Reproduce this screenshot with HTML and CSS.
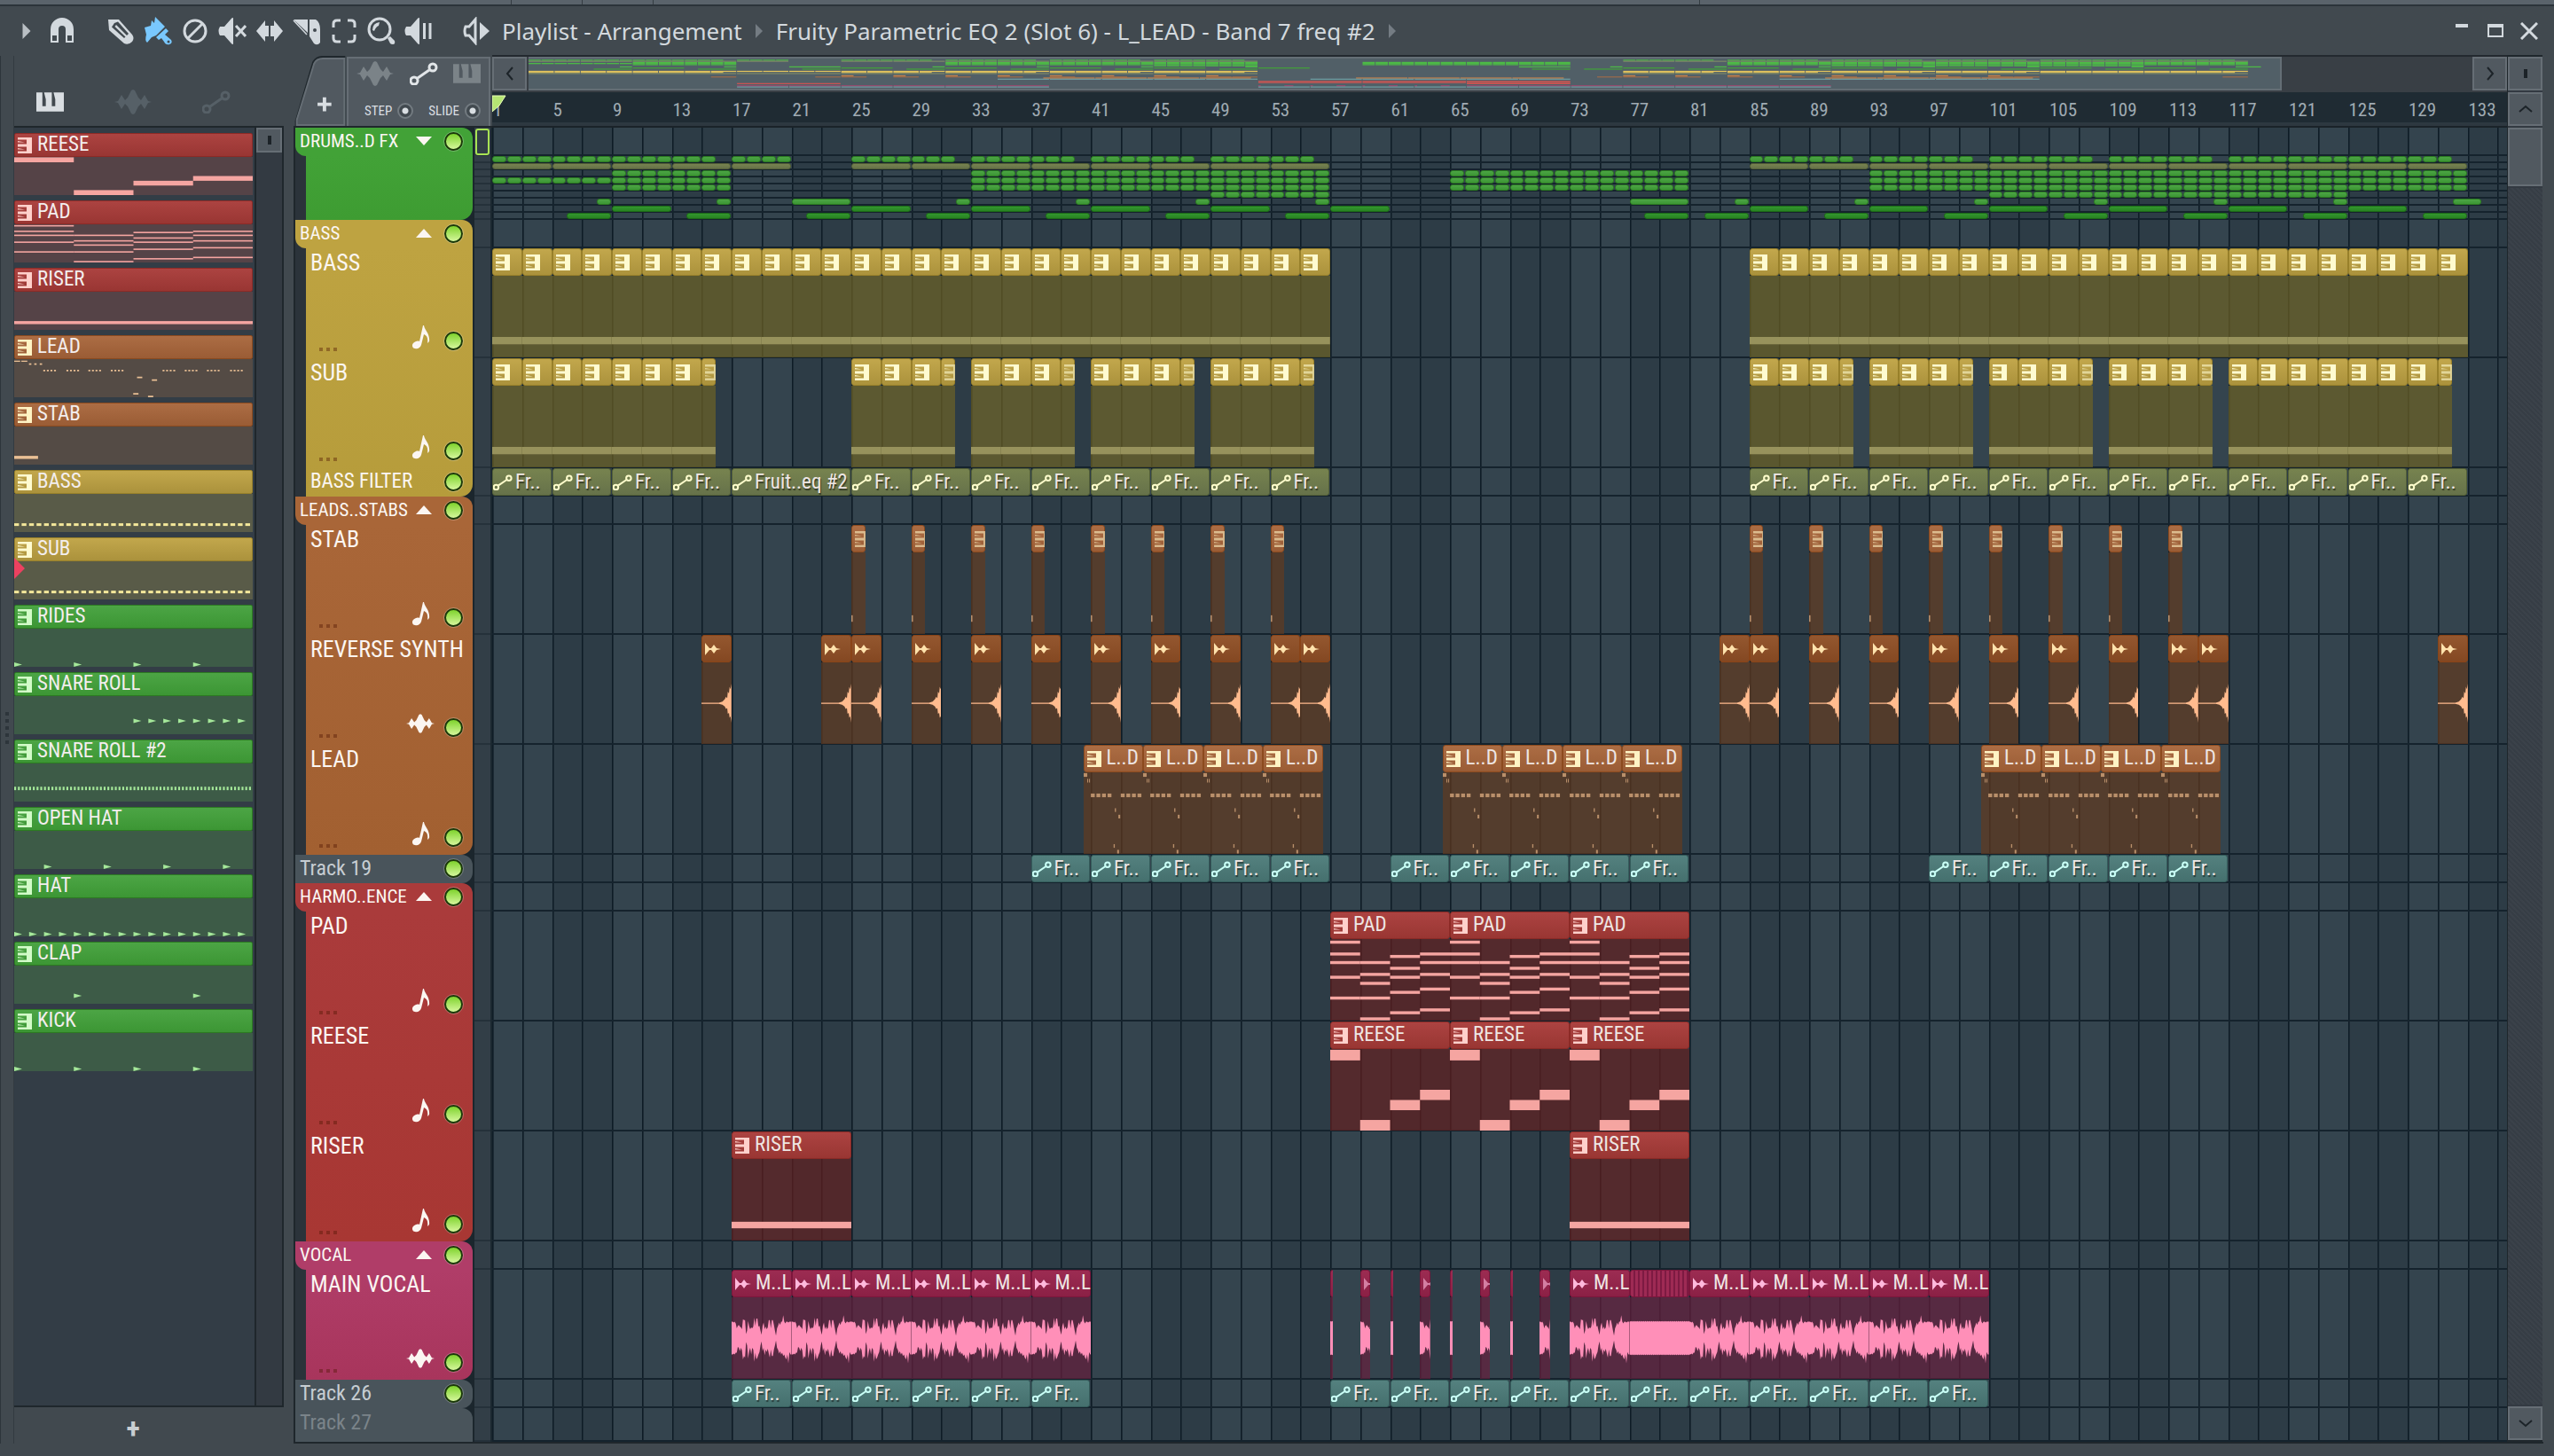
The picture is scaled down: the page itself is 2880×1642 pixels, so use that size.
FILE: index.html
```html
<!DOCTYPE html>
<html lang="en">
<head>
    <meta charset="UTF-8">
    <meta name="viewport" content="width=device-width, initial-scale=1.0">
    <title>Playlist - Arrangement</title>
    <link rel="stylesheet" href="styles.css">
</head>
<body>

    <svg class="sprite" aria-hidden="true">
        <symbol id="piano" viewBox="0 0 16 18"><path d="M0 0H16V18H0V15.500H10V10.500H0V7.500H10V2.500H0Z"/><path d="M0 4L8 5.500H0ZM0 12L8 13.500H0Z"/></symbol>
        <symbol id="keys" viewBox="0 0 32 22"><path d="M0 0H7V16H11V8L9 0H18V16H22V8L20 0H32V22H0Z"/></symbol>
        <symbol id="wave" viewBox="0 0 42 28"><path d="M0 14L4 13L8 6L12 12L15 9L19 1L21 0L23 1L27 9L30 12L34 6L38 13L42 14L38 15L34 22L30 16L27 19L23 27L21 28L19 27L15 19L12 16L8 22L4 15Z"/></symbol>
        <symbol id="sample" viewBox="0 0 18 14"><path d="M0 0L5 6L7 6L10 2L13 6L18 7L13 8L10 12L7 8L5 8L0 14Z"/></symbol>
        <symbol id="auto" viewBox="0 0 32 26"><g fill="none" stroke="currentColor" stroke-width="3"><circle cx="26" cy="6" r="4"/><circle cx="5" cy="21" r="4"/><path d="M9 18L22 9"/></g></symbol>
        <symbol id="note" viewBox="0 0 20 27"><path d="M12 0H13C14 6 20 9 19 18L17 20C18 14 16 11 13 10L10 22C9 25 6 27 3 26C0 26 -1 22 1 20C3 18 6 17 8 18Z"/></symbol>
    </svg>

    <div class="strip"><i></i><i></i><i></i><i></i></div>

    <header class="titlebar">
        <button class="tool menu" aria-label="Menu"><svg viewBox="0 0 10 20"><path d="M0 0L10 10L0 20Z"/></svg></button>
        <button class="tool" aria-label="Snap"><svg viewBox="0 0 32 32"><path d="M3 29V14A13 13 0 0 1 29 14V29H20V14A4 4 0 0 0 12 14V29Z"/><path class="cut" d="M5 21H10V27H5ZM22 21H27V27H22Z"/></svg></button>
        <div class="toolset">
            <button class="tool" aria-label="Draw"><svg viewBox="0 0 32 32"><path d="M2 3H14L29 20Q32 24 29 28Q25 32 20 30L3 15Z"/><path class="cut" d="M9 7L13 5.500L25 19L20 24L6 11.500Z"/><path d="M11 9L24 22L22.500 23.500L9.500 11Z"/></svg></button>
            <button class="tool on" aria-label="Paint"><svg viewBox="0 0 32 32"><path d="M1 12L8 10L9 4L12 7L13 0L24 11L14 21L9 23L4 29Q1 27 3 20Z"/><path d="M25 13L28 16L24 20L31 26Q33 30 29 31Q25 32 23 28L20 24L17 26L14 23Z"/><circle class="cut" cx="28" cy="28" r="1.500"/></svg></button>
            <button class="tool" aria-label="Delete"><svg viewBox="0 0 32 32"><g class="line"><circle cx="16" cy="16" r="12"/><path d="M8 24L24 8"/></g></svg></button>
            <button class="tool" aria-label="Mute"><svg viewBox="0 0 32 32"><path d="M2 11H7L14 3Q15 1 17 1V31Q15 31 14 29L7 21H2Q-1 16 2 11Z"/><path class="line" d="M20 10L31 22M31 10L20 22"/></svg></button>
            <button class="tool" aria-label="Slip"><svg viewBox="0 0 32 32"><path d="M1 16L11 4V10H15V22H11V28ZM31 16L21 4V10H17V22H21V28Z"/></svg></button>
            <button class="tool" aria-label="Slice"><svg viewBox="0 0 32 32"><path d="M1 3H17V18Z"/><path class="line thin" d="M1 4L16 20"/><path d="M19 3H26Q31 6 31 14V29Q28 33 24 30L19 22Z"/><circle class="cut" cx="25" cy="15" r="2"/></svg></button>
            <button class="tool" aria-label="Select"><svg viewBox="0 0 32 32"><path class="line" d="M4 12V8Q4 4 8 4H12M20 4H24Q28 4 28 8V12M28 20V24Q28 28 24 28H20M12 28H8Q4 28 4 24V20"/></svg></button>
            <button class="tool" aria-label="Zoom"><svg viewBox="0 0 32 32"><circle class="line" cx="14" cy="14" r="12"/><path d="M6 15Q6 7 14 6L13 10Q10 11 8 16Z"/><path d="M23 24L26 22L31 27Q32 31 29 31Q27 31 26 30Z"/></svg></button>
            <button class="tool" aria-label="Playback"><svg viewBox="0 0 32 32"><path d="M2 11H7L14 3Q15 1 17 1V31Q15 31 14 29L7 21H2Q-1 16 2 11Z"/><path class="line" d="M22.500 7V25M29 7V25"/></svg></button>
        </div>
        <button class="tool" aria-label="Play preview"><svg viewBox="0 0 32 32"><path class="line" d="M15 3L8 11H4Q2 16 4 21H8L15 29Z"/><path d="M20 6L31 16L20 26Z"/></svg></button>
        <h1 class="path">
            <span>Playlist - Arrangement</span>
            <svg viewBox="0 0 8 16"><path d="M0 0L8 8L0 16Z"/></svg>
            <span>Fruity Parametric EQ 2 (Slot 6) - L_LEAD - Band 7 freq #2</span>
            <svg viewBox="0 0 8 16"><path d="M0 0L8 8L0 16Z"/></svg>
        </h1>
        <div class="winbtns">
            <button aria-label="Minimize"><svg viewBox="0 0 20 20"><path d="M3 2H17V6H3Z"/></svg></button>
            <button aria-label="Maximize"><svg viewBox="0 0 20 20"><path d="M1 2H19V17H1ZM3 6V15H17V6Z" fill-rule="evenodd"/></svg></button>
            <button aria-label="Close"><svg viewBox="0 0 20 20"><path class="line" d="M1 1L19 19M19 1L1 19"/></svg></button>
        </div>
    </header>

    <main class="main">
        <div class="edge"><i></i><i></i><i></i><i></i><i></i></div>

        <aside class="picker">
            <div class="picker-tabs">
                <button class="on" aria-label="Patterns"><svg class="keys"><use href="#keys"/></svg></button>
                <button aria-label="Audio clips"><svg class="wave"><use href="#wave"/></svg></button>
                <button aria-label="Automation clips"><svg class="auto"><use href="#auto"/></svg></button>
            </div>
            <div class="picker-body">
                <div class="picker-list"></div>
                <div class="vscroll narrow"><button aria-label="Scroll patterns"><b></b></button></div>
            </div>
            <button class="picker-add" aria-label="Add pattern">+</button>
        </aside>

        <section class="playlist">
            <div class="corner">
                <button class="add" aria-label="Add track">
                    <svg viewBox="0 0 60 82"><path class="rim" d="M1 82V76L21 8Q25 1 32 1H59V82Z"/><path class="fill" d="M3 81V75L23 10Q26 4 33 4H58V81Z"/><path class="plus" d="M27 57H43M35 49V65"/></svg>
                </button>
                <div class="modes">
                    <div class="mode-row">
                        <button aria-label="Audio"><svg class="wave"><use href="#wave"/></svg></button>
                        <button class="on" aria-label="Automation"><svg class="auto"><use href="#auto"/></svg></button>
                        <button aria-label="Patterns"><svg class="keys"><use href="#keys"/></svg></button>
                    </div>
                    <div class="mode-row">
                        <label>STEP <input type="checkbox"></label>
                        <label>SLIDE <input type="checkbox"></label>
                    </div>
                </div>
            </div>

            <div class="overview">
                <button class="sq" aria-label="Scroll left"><svg viewBox="0 0 10 16"><path d="M8 1L2 8L8 15"/></svg></button>
                <div class="overview-bar"><svg class="minimap" viewBox="0 0 134.4 27" preserveAspectRatio="none"></svg></div>
                <button class="sq" aria-label="Scroll right"><svg viewBox="0 0 10 16"><path d="M2 1L8 8L2 15"/></svg></button>
            </div>
            <div class="ruler"></div>

            <div class="tracks">
                <div class="heads"></div>
                <div class="gutter"></div>
                <div class="lanes"></div>
            </div>

            <div class="vscroll">
                <button class="sq" aria-label="Zoom"><b></b></button>
                <button class="sq" aria-label="Scroll up"><svg viewBox="0 0 16 10"><path d="M1 8L8 2L15 8"/></svg></button>
                <div class="thumb"></div>
                <div class="rest"></div>
                <button class="sq" aria-label="Scroll down"><svg viewBox="0 0 16 10"><path d="M1 2L8 8L15 2"/></svg></button>
            </div>
        </section>
    </main>

    <script src="script.js"></script>
</body>
</html>
```
FILE: script.js
```js
// ---------- notes, as [x, y, width, height] in a 0-1 box ----------

function column(q, ys, h) {
    return ys.map(y => [q * 0.25, y, 0.25, h]);
}

const leadDots = [];
[0.122, 0.219, 0.311, 0.405, 0.622, 0.715, 0.808, 0.905].forEach(x => {
    for (let i = 0; i < 4; i++) leadDots.push([x + i * 0.015, 0.28, 0.008, 0.04]);
});

const leadClip = [[0, 0.01, 0.06, 0.045], [0.06, 0.08, 0.015, 0.045], [0.09, 0.08, 0.015, 0.045]];
[0.12, 0.62].forEach(x => {
    for (let i = 0; i < 4; i++) leadClip.push([x + i * 0.093, 0.26, 0.065, 0.045]);
});
leadClip.push([0.52, 0.44, 0.02, 0.045], [0.58, 0.52, 0.03, 0.045], [0.5, 0.88, 0.02, 0.045], [0.56, 0.95, 0.03, 0.045]);

const notes = {
    reese: [[0, 0.01, 0.25, 0.13], [0.25, 0.87, 0.25, 0.13], [0.5, 0.625, 0.25, 0.125], [0.75, 0.5, 0.25, 0.125]],
    pad: [
        ...column(0, [0.02, 0.165, 0.27, 0.45, 0.705], 0.037),
        ...column(1, [0.27, 0.415, 0.525, 0.705, 0.96], 0.037),
        ...column(2, [0.195, 0.34, 0.45, 0.635, 0.885], 0.037),
        ...column(3, [0.165, 0.27, 0.415, 0.595, 0.85], 0.037)
    ],
    riser: [[0, 0.77, 1, 0.08]],
    lead: [[0, 0.04, 0.025, 0.03], [0.03, 0.04, 0.025, 0.03], [0.062, 0.11, 0.01, 0.04], [0.084, 0.11, 0.01, 0.04], [0.107, 0.11, 0.01, 0.04],
        ...leadDots, [0.515, 0.46, 0.022, 0.04], [0.577, 0.53, 0.022, 0.04], [0.499, 0.89, 0.022, 0.04], [0.561, 0.96, 0.022, 0.04]],
    leadClip: leadClip,
    stab: [[0, 0.77, 0.1, 0.08]],
    bass: Array.from({ length: 32 }, (_, i) => [i / 32, 0.77, 0.02, 0.07]),
    band: [[0, 0.75, 1, 0.09]],
    ticks: Array.from({ length: 64 }, (_, i) => [i / 64, 0.61, 0.008, 0.09])
};

// drum hits, as [x, y]
function hits(from, step, count, y) {
    return Array.from({ length: count }, (_, i) => [from + i * step, y]);
}

const patterns = [
    { name: 'REESE', color: 'red', notes: notes.reese },
    { name: 'PAD', color: 'red', notes: notes.pad },
    { name: 'RISER', color: 'red', notes: notes.riser },
    { name: 'LEAD', color: 'orange', notes: notes.lead },
    { name: 'STAB', color: 'orange', notes: notes.stab },
    { name: 'BASS', color: 'gold', notes: notes.bass },
    { name: 'SUB', color: 'gold', notes: notes.bass, current: true },
    { name: 'RIDES', color: 'green', hits: hits(0, 0.25, 4, 0.94) },
    { name: 'SNARE ROLL', color: 'green', hits: hits(0.5, 0.0625, 8, 0.65) },
    { name: 'SNARE ROLL #2', color: 'green', notes: notes.ticks },
    { name: 'OPEN HAT', color: 'green', hits: hits(0.125, 0.25, 4, 0.94) },
    { name: 'HAT', color: 'green', hits: hits(0, 0.0625, 16, 0.94) },
    { name: 'CLAP', color: 'green', hits: hits(0.25, 0.5, 2, 0.79) },
    { name: 'KICK', color: 'green', hits: hits(0, 0.25, 4, 0.94) }
];

// ---------- clips, as [first bar, length in bars] ----------

function run(from, to, len) {
    const list = [];
    for (let bar = from; bar < to; bar += len) list.push([bar, Math.min(len, to - bar)]);
    return list;
}
function each(bars, len) {
    return bars.map(bar => [bar, len]);
}

const drums = [
    { color: 'green', clips: [...run(1, 16, 1), ...run(17, 21, 1), ...run(25, 32, 1), ...run(33, 40, 1), ...run(41, 48, 1), ...run(49, 56, 1), ...run(85, 92, 1), ...run(93, 100, 1), ...run(101, 108, 1), ...run(109, 116, 1), ...run(117, 132, 1)] },
    { color: 'olive', clips: [...run(1, 21, 4), ...run(25, 57, 4), ...run(85, 133, 4)] },
    { color: 'green', clips: [...run(9, 17, 1), ...run(33, 57, 1), ...run(65, 81, 1), ...run(93, 133, 1)] },
    { color: 'green', clips: [...run(1, 17, 1), ...run(33, 57, 1), ...run(65, 81, 1), ...run(93, 133, 1)] },
    { color: 'green', clips: [...run(9, 17, 1), ...run(33, 57, 1), ...run(65, 81, 1), ...run(93, 133, 1)] },
    { color: 'green', clips: [...run(49, 57, 1), ...run(101, 125, 1)] },
    { color: 'green', clips: [...each([8, 16, 32, 40, 48, 56, 84, 92, 100, 108, 116, 124], 1), [21, 4], [77, 4], [132, 2]] },
    { color: 'forest', clips: each([9, 25, 33, 41, 49, 57, 85, 93, 101, 109, 117, 125], 4) },
    { color: 'forest', clips: each([6, 14, 22, 30, 38, 46, 54, 78, 82, 90, 98, 106, 114, 122, 130], 3) }
];

const bassFilter = [...run(1, 17, 4), [17, 8], ...run(25, 57, 4), ...run(85, 133, 4)];
const sub = [...run(1, 16, 2), ...run(25, 32, 2), ...run(33, 40, 2), ...run(41, 48, 2), ...run(49, 56, 2), ...run(85, 92, 2), ...run(93, 100, 2), ...run(101, 108, 2), ...run(109, 116, 2), ...run(117, 132, 2)];
const reverse = each([15, 23, 25, 29, 33, 37, 41, 45, 49, 53, 55, 83, 85, 89, 93, 97, 101, 105, 109, 113, 115, 131], 2);
const vocal = [...run(17, 41, 4), [57, 0.25], [59, 0.75], [61, 0.25], [63, 0.75], [65, 0.25], [67, 0.75], [69, 0.25], [71, 0.75], [73, 4], [77, 4, 'sliced'], ...run(81, 101, 4)];

const groups = [
    { name: 'DRUMS..D FX', color: 'green', closed: true, tracks: drums.map(d => ({ ...d, size: 'mini' })) },
    { name: 'BASS', color: 'gold', tracks: [
        { name: 'BASS', size: 'big', icon: 'note', color: 'gold', notes: notes.band, clips: [...run(1, 57, 2), ...run(85, 133, 2)] },
        { name: 'SUB', size: 'big', icon: 'note', color: 'gold', notes: notes.band, clips: sub },
        { name: 'BASS FILTER', size: 'small', color: 'olive', label: 'Fr..', clips: bassFilter }
    ] },
    { name: 'LEADS..STABS', color: 'orange', tracks: [
        { name: 'STAB', size: 'big', icon: 'note', color: 'orange', notes: notes.stab, clips: [...each([25, 29, 33, 37, 41, 45, 49, 53, 85, 89, 93, 97, 101, 105, 109, 113], 1)] },
        { name: 'REVERSE SYNTH', size: 'big', icon: 'wave', color: 'brown', wave: 'swell', clips: reverse },
        { name: 'LEAD', size: 'big', icon: 'note', color: 'orange', notes: notes.leadClip, label: 'L..D', clips: [...run(40.5, 56.5, 4), ...run(64.5, 80.5, 4), ...run(100.5, 116.5, 4)] }
    ] },
    { name: 'Track 19', color: 'slate', size: 'small', label: 'Fr..', clipColor: 'teal', clips: [...run(37, 57, 4), ...run(61, 81, 4), ...run(97, 117, 4)] },
    { name: 'HARMO..ENCE', color: 'red', tracks: [
        { name: 'PAD', size: 'big', icon: 'note', color: 'red', notes: notes.pad, label: 'PAD', clips: run(57, 81, 8) },
        { name: 'REESE', size: 'big', icon: 'note', color: 'red', notes: notes.reese, label: 'REESE', clips: run(57, 81, 8) },
        { name: 'RISER', size: 'big', icon: 'note', color: 'red', notes: notes.riser, label: 'RISER', clips: [[17, 8], [73, 8]] }
    ] },
    { name: 'VOCAL', color: 'pink', tracks: [
        { name: 'MAIN VOCAL', size: 'big', icon: 'wave', color: 'pink', wave: 'voice', label: 'M..L', clips: vocal }
    ] },
    { name: 'Track 26', color: 'slate', size: 'small', label: 'Fr..', clipColor: 'teal', clips: [...run(17, 41, 4), ...run(57, 101, 4)] },
    { name: 'Track 27', color: 'slate', size: 'rest', off: true, clips: [] }
];

// ---------- drawing ----------

function rects(list) {
    return '<svg class="notes" viewBox="0 0 1 1" preserveAspectRatio="none">' +
        list.map(n => `<rect x="${n[0]}" y="${n[1]}" width="${n[2]}" height="${n[3]}"/>`).join('') + '</svg>';
}
function arrows(list) {
    return '<svg class="notes" viewBox="0 0 270 43" preserveAspectRatio="none">' +
        list.map(h => `<path d="M${h[0] * 270} ${h[1] * 43 - 2.5}l9 2.500l-9 2.500z"/>`).join('') + '</svg>';
}

// peak heights over one four bar phrase
const upper = [20, 20, 19, 20, 18, 12, 15, 16, 14, 13, 11, 23, 22, 22, 5, 9, 21, 14, 11, 13, 12, 14, 25, 15, 24, 24, 14, 15, 9, 4, 15, 19, 11, 14, 11, 13, 22, 22, 12, 22, 22, 16, 9, 3, 12, 15, 19, 16, 20, 20, 28, 20, 18, 20, 20, 19, 20, 20];
const lower = [20, 20, 19, 20, 18, 18, 11, 12, 16, 12, 15, 26, 22, 24, 5, 9, 25, 16, 12, 20, 12, 14, 29, 18, 26, 24, 20, 17, 9, 4, 16, 12, 21, 14, 17, 13, 19, 24, 14, 22, 22, 14, 9, 3, 12, 14, 19, 16, 20, 18, 22, 20, 24, 26, 20, 31, 17, 20];

function voicePath(from, len, flat) {
    const steps = Math.max(2, Math.round(upper.length * len / 4));
    let top = [], bottom = [];
    for (let i = 0; i <= steps; i++) {
        const x = i / steps;
        const a = flat ? 20 + i % 2 : upper[i % upper.length];
        const b = flat ? 20 + i % 2 : lower[i % lower.length];
        top.push(`${x} ${(50 - a) / 100}`);
        bottom.unshift(`${x} ${(50 + b) / 100}`);
    }
    return 'M' + top.join('L') + 'L' + bottom.join('L') + 'Z';
}
const swellPath = 'M0 .495H.58L.7 .48L.78 .45L.82 .42L.86 .44L.88 .36L.92 .38L.94 .3L.97 .33L1 .26V.74L.97 .66L.94 .68L.92 .62L.88 .63L.86 .56L.82 .57L.78 .54L.7 .52L.58 .508H0Z';

function wave(track, clip) {
    const d = track.wave === 'swell' ? swellPath : voicePath(clip[0], clip[1], clip[2] || clip[1] < 0.5);
    return `<svg class="notes" viewBox="0 0 1 1" preserveAspectRatio="none"><path d="${d}"/></svg>`;
}

function clipHtml(track, clip) {
    const color = track.clipColor || track.color;
    const pos = `--at:${clip[0] - 1};--len:${clip[1]}`;
    if (track.size === 'mini') return `<div class="clip ${color}" style="${pos}"></div>`;

    if (track.size === 'small') {
        const text = clip[1] > 4 ? 'Fruit..eq #2' : track.label;
        return `<div class="clip automation ${color}" style="${pos}"><svg><use href="#auto"/></svg><span>${text}</span></div>`;
    }
    const icon = track.wave ? 'sample' : 'piano';
    const cls = clip[2] || (clip[1] < 0.5 ? 'bare' : clip[1] < 2 ? 'faint' : '');
    const text = track.label && clip[1] >= 4 && !clip[2] ? `<span>${track.label}</span>` : '';
    return `<div class="clip ${color} ${cls}" style="${pos}">
        <div class="clip-head"><svg class="${icon}"><use href="#${icon}"/></svg>${text}</div>
        <div class="clip-body">${track.wave ? wave(track, clip) : rects(track.notes)}</div>
    </div>`;
}

const led = name => `<input class="led" type="checkbox" checked aria-label="Enable ${name}">`;

function trackHead(t) {
    if (t.size === 'small') return `<div class="head small"><span>${t.name}</span>${led(t.name)}</div>`;
    return `<div class="head big"><span>${t.name}</span>
        <div class="head-foot"><i class="dots"></i><svg class="${t.icon}"><use href="#${t.icon}"/></svg>${led(t.name)}</div></div>`;
}

function headHtml(g) {
    if (!g.tracks) {
        return `<div class="loose ${g.size} ${g.off ? 'off' : ''}"><span>${g.name}</span>${g.off ? '' : led(g.name)}</div>`;
    }
    return `<div class="group ${g.color}">
        <div class="group-tab"><span>${g.name}</span><svg class="fold" viewBox="0 0 18 10"><path d="${g.closed ? 'M0 0H18L9 10Z' : 'M0 10H18L9 0Z'}"/></svg>${led(g.name + ' group')}</div>
        <div class="group-body ${g.closed ? 'closed' : ''}">${g.closed ? '' : g.tracks.map(trackHead).join('')}</div>
    </div>`;
}

// flat list of rows, a group header is an empty row
const rows = [];
groups.forEach(g => {
    if (!g.tracks) { rows.push(g); return; }
    rows.push({ size: 'small', clips: [] });
    rows.push(...g.tracks);
});

document.querySelector('.heads').innerHTML = groups.map(headHtml).join('');
document.querySelector('.gutter').innerHTML = rows.map((r, i) => `<div class="cell ${r.size} ${i === 0 ? 'picked' : ''}"></div>`).join('');
document.querySelector('.lanes').innerHTML = rows.map(r =>
    `<div class="lane ${r.size}">${r.clips.map(c => clipHtml(r, c)).join('')}</div>`).join('');

document.querySelector('.minimap').innerHTML = rows.map((r, i) => r.clips.map(c =>
    `<rect class="${r.clipColor || r.color}" x="${c[0] - 1}" y="${i}" width="${c[1] - 0.06}" height="1"/>`).join('')).join('');

let marks = '<svg class="playhead" viewBox="0 0 16 20"><path d="M0 1H15L8 12L0 19Z"/></svg>';
for (let bar = 1; bar <= 133; bar += 4) marks += `<span style="--at:${bar - 1}">${bar}</span>`;
document.querySelector('.ruler').innerHTML = marks;

document.querySelector('.picker-list').innerHTML = patterns.map(p => `
    <div class="pattern ${p.color} ${p.current ? 'current' : ''}">
        <div class="pattern-head"><svg class="piano"><use href="#piano"/></svg><span>${p.name}</span></div>
        <div class="pattern-body">${p.hits ? arrows(p.hits) : rects(p.notes)}</div>
    </div>`).join('');
```
FILE: styles.css
```css
*{
    margin: 0;
    padding: 0;
    box-sizing: border-box;
}

body{
    min-height: 100vh;
    display: flex;
    flex-direction: column;
    background-color: #41494f;
    color: #dde2e5;
    font-family: "Roboto Condensed", Roboto, sans-serif;
    font-size: 23px;
    overflow: hidden;
}
button{
    background: none;
    border: 0;
    color: inherit;
    font: inherit;
}
svg{
    display: block;
    fill: currentColor;
}
.sprite{
    position: absolute;
    width: 0;
    height: 0;
}

/* colours: head, clip top, clip bottom, clip edge, body, note */
.green{ --head: #42a237; --head2: #3e9c32; --top: #4ca545; --low: #3c9634; --rim: #2c7a22; --body: #3d5b47; --note: #a5e89a; --icon: #d2fbc8; --mini: #4dbb46; }
.forest{ --top: #33962e; --low: #288322; --rim: #1d6a18; --mini: #42a03b; }
.gold{ --head: #bea341; --head2: #b69c3b; --top: #c2a74c; --low: #ab923c; --rim: #98802a; --body: #595b48; --glass: rgba(110,99,37,.7); --note: #f3e79a; --icon: #fffbd0; --mini: #e2c35c; }
.orange{ --head: #a96638; --head2: #a26031; --top: #ac6d44; --low: #9a5c35; --rim: #8c4a1e; --body: #544b45; --glass: rgba(99,58,32,.7); --note: #eac095; --icon: #fff3c4; --mini: #cb8449; }
.brown{ --top: #94572f; --low: #844822; --rim: #8a4417; --glass: rgba(99,58,32,.7); --note: #ffbb8e; --icon: #ffe2ac; --mini: #996a4b; }
.red{ --head: #aa3b3b; --head2: #a83733; --top: #ac4341; --low: #993633; --rim: #8c2a26; --body: #554347; --glass: rgba(98,32,32,.7); --note: #f5a5a1; --icon: #ffd0cb; --mini: #cf5553; }
.pink{ --head: #b03d68; --head2: #a8355c; --top: #9c2c52; --low: #8b2045; --rim: #7d163c; --glass: rgba(102,31,61,.7); --note: #ff8fb8; --icon: #ffb9dc; --mini: #a44570; }
.olive{ --top: #77834f; --low: #66724a; --rim: #535f37; --icon: #fdfccb; --mini: #7b8768; }
.teal{ --top: #54817f; --low: #45706e; --rim: #345c5b; --icon: #c9fff6; --mini: #6f9ba1; }

/* top */
.strip{
    height: 7px;
    background-color: #5a636b;
    border-bottom: 2px solid #2c343a;
    display: grid;
    grid-template-columns: 577px 80px 80px 1180px 662px;
}
.strip i{
    border-right: 1px solid #343c42;
}
.titlebar{
    height: 56px;
    padding: 0 18px 0 16px;
    display: flex;
    align-items: center;
    color: #d3d9de;
}
.tool{
    width: 42px;
    height: 42px;
    display: flex;
    align-items: center;
    justify-content: center;
}
.tool svg{
    width: 32px;
    height: 32px;
}
.tool.menu{
    width: 33px;
    padding-right: 6px;
}
.tool.menu svg{
    width: 10px;
    height: 18px;
    fill: #b9bfc4;
}
.tool.on{
    color: #79c8ff;
}
.toolset{
    display: flex;
    margin: 0 23px 0 24px;
}
.line{
    fill: none;
    stroke: currentColor;
    stroke-width: 3;
}
.line.thin{
    stroke-width: 1.5;
}
.cut{
    fill: #41494f;
}
.path{
    flex: 1;
    margin-left: 8px;
    display: flex;
    align-items: center;
    gap: 15px;
    font: 26px/32px "Noto Sans", "Open Sans", sans-serif;
    white-space: nowrap;
}
.path svg{
    width: 8px;
    height: 16px;
    fill: #747c83;
}
.winbtns{
    display: flex;
    gap: 18px;
}
.winbtns svg{
    width: 20px;
    height: 20px;
}

/* main */
.main{
    flex: 1;
    display: flex;
    padding-bottom: 14px;
}
.edge{
    width: 16px;
    border-left: 1px solid #2d353b;
    border-right: 1px solid #333b41;
    display: flex;
    flex-direction: column;
    align-items: center;
    justify-content: center;
    gap: 4px;
    padding-bottom: 50px;
}
.edge i{
    width: 4px;
    height: 4px;
    background-color: #2d353b;
}

/* picker */
.picker{
    width: 304px;
    display: flex;
    flex-direction: column;
}
.picker-tabs{
    height: 79px;
    display: flex;
    padding: 22px 0 0 24px;
    color: #566067;
}
.picker-tabs button{
    width: 36px;
    height: 60px;
    margin-right: 60px;
    display: flex;
    align-items: center;
    justify-content: center;
}
.picker-tabs .on{
    color: #d9dee2;
}
svg.keys{ width: 31px; height: 22px; }
svg.wave{ width: 42px; height: 28px; flex: none; }
svg.auto{ width: 32px; height: 26px; }
svg.piano{ width: 16px; height: 18px; flex: none; }
svg.sample{ width: 18px; height: 14px; flex: none; }

.picker-body{
    flex: 1;
    display: flex;
    background-color: #333d46;
    border: solid #1f272c;
    border-width: 2px 2px 2px 0;
}
.picker-list{
    flex: 1;
    padding: 6px 2px 0 0;
    display: flex;
    flex-direction: column;
    gap: 6px;
}
.pattern{
    position: relative;
    height: 70px;
    color: #f3eeee;
}
.pattern-head{
    height: 27px;
    display: flex;
    align-items: center;
    gap: 6px;
    padding-left: 3px;
    line-height: 24px;
    background: linear-gradient(var(--top), var(--low));
    border: 1px solid var(--rim);
    border-radius: 2px;
}
.pattern-head span{
    padding-bottom: 2px;
}
.piano, .sample{
    fill: var(--icon);
}
.pattern-body{
    height: 43px;
    background-color: var(--body);
}
.notes{
    width: 100%;
    height: 100%;
    fill: var(--note);
}
.pattern.current::before{
    content: "";
    position: absolute;
    left: 0;
    top: 23px;
    width: 12px;
    height: 24px;
    background-color: #ec4160;
    clip-path: polygon(0 0, 100% 50%, 0 100%);
}
.picker-add{
    height: 41px;
    padding: 6px 36px 0 0;
    font-size: 32px;
    line-height: 34px;
    font-weight: bold;
    color: #c8ced2;
}

/* scroll bars */
.vscroll{
    grid-column: 3;
    grid-row: 1 / 4;
    width: 40px;
    display: flex;
    flex-direction: column;
    gap: 2px;
    border: solid #1f272c;
    border-width: 2px 0 2px 1px;
    background-color: #333a42;
}
.vscroll.narrow{
    width: 31px;
    border-width: 0 0 0 2px;
}
.vscroll.narrow button{
    height: 28px;
    background-color: #515960;
    border: 2px solid #666e75;
    display: flex;
    align-items: center;
    justify-content: center;
}
.vscroll b{
    width: 4px;
    height: 10px;
    background-color: #1c2328;
}
.sq{
    width: 39px;
    height: 38px;
    flex: none;
    display: flex;
    align-items: center;
    justify-content: center;
    background-color: #515960;
    border: 2px solid #666e75;
}
.sq svg{
    width: 16px;
    height: 16px;
    fill: none;
    stroke: #1c2328;
    stroke-width: 2;
}
.thumb{
    height: 66px;
    background-color: #515960;
    border: 2px solid #666e75;
}
.vscroll .rest{
    background: repeating-linear-gradient(45deg, #3b424a 0 2px, #363d45 2px 4px);
}

/* playlist */
.playlist{
    flex: 1;
    margin: -1px 12px 0 11px;
    border-left: 2px solid #1f272c;
    border-bottom: 2px solid #1f272c;
    display: grid;
    grid-template-columns: 222px 1fr 41px;
    grid-template-rows: 42px 40px 1fr;
}
.corner{
    grid-row: 1 / 3;
    margin-left: -2px;
    display: flex;
    background-color: #41494f;
    border-bottom: 2px solid #1f272c;
}
.add svg{
    width: 60px;
    height: 80px;
}
.add .rim{ fill: #1f272c; }
.add .fill{ fill: #515960; stroke: #666e75; stroke-width: 2; }
.add .plus{ stroke: #d9dee2; stroke-width: 4; }
.modes{
    width: 162px;
    margin-top: 2px;
    background-color: #515960;
    border: 2px solid #666e75;
    border-bottom: 0;
    display: flex;
    flex-direction: column;
    justify-content: space-between;
    padding: 3px 9px 8px;
}
.mode-row{
    display: flex;
    align-items: center;
    justify-content: space-between;
    color: #7b8388;
}
.mode-row .on{
    color: #e2e6e9;
}
.mode-row label{
    display: flex;
    align-items: center;
    gap: 6px;
    margin-left: 9px;
    font-size: 15px;
    color: #d9dee2;
}
.mode-row label:last-child{
    margin-left: 0;
}
.mode-row input{
    appearance: none;
    width: 18px;
    height: 18px;
    border-radius: 50%;
    border: 2px solid #737b81;
    background: radial-gradient(circle, #d9dee2 0 3px, #41494f 4px);
}

.overview{
    display: flex;
    border-top: 2px solid #23292f;
    background-color: #393f45;
}
.overview .sq:last-child{
    margin-left: auto;
}
.overview-bar{
    flex: 1;
    padding-right: 215px;
    margin-left: 2px;
}
.minimap{
    width: 100%;
    height: 38px;
    background-color: #515f67;
    border: 2px solid #646e75;
    border-left: 0;
}
.minimap rect{
    fill: var(--mini);
}

.ruler{
    position: relative;
    background: linear-gradient(#1f2b33 34px, #2d3840 34px 38px, #1a2329 38px);
    font-size: 21px;
    line-height: 24px;
    color: #a0abb3;
}
.ruler span{
    position: absolute;
    top: 8px;
    left: calc(var(--at) * 135px / 8);
    padding-left: 1px;
}
.playhead{
    position: absolute;
    left: 0;
    top: 3px;
    z-index: 1;
    width: 16px;
    height: 20px;
    fill: #b5e573;
    stroke: #e9ffb9;
}

.tracks{
    grid-column: 1 / 3;
    display: grid;
    grid-template-columns: 202px 20px 1fr;
}
.heads{
    display: flex;
    flex-direction: column;
    background: linear-gradient(90deg, #2b333a 12px, #1b262d 12px);
}
.small{ height: 32px; }
.big{ height: 124px; }
.mini{ height: 8px; }
.rest{ flex: 1; }

.group{
    width: 200px;
    color: #fbf6f2;
}
.group-tab{
    height: 32px;
    display: flex;
    align-items: center;
    padding: 0 11px 2px 5px;
    font-size: 21px;
    line-height: 30px;
    background-color: var(--head);
    border-radius: 0 12px 0 12px;
}
.group-tab span{
    flex: 1;
}
.fold{
    width: 18px;
    height: 10px;
    margin-right: 14px;
}
.group-body{
    margin-left: 12px;
    background: linear-gradient(var(--head), var(--head2));
    border-radius: 0 0 14px 0;
}
.group-body.closed{
    height: 72px;
}
.head.small, .loose{
    display: flex;
    align-items: center;
    justify-content: space-between;
    padding: 0 11px 2px 5px;
    line-height: 28px;
}
.head.big{
    display: flex;
    flex-direction: column;
    justify-content: space-between;
    padding: 0 0 8px 5px;
    font-size: 26px;
    line-height: 32px;
    white-space: nowrap;
}
.head-foot{
    display: flex;
    align-items: center;
    padding: 0 11px 0 10px;
}
.dots{
    width: 21px;
    height: 4px;
    margin: 20px auto 0 0;
    background: repeating-linear-gradient(90deg, rgba(80,20,0,.4) 0 4px, transparent 4px 8px);
}
svg.note{
    width: 20px;
    height: 27px;
    margin: -8px 16px 0 0;
}
.head-foot svg.wave{
    width: 32px;
    height: 24px;
    margin: -8px 11px 0 0;
}
.led{
    appearance: none;
    width: 21px;
    height: 21px;
    border-radius: 50%;
    border: 2px solid #1c3a0a;
    outline: 1px solid rgba(255,255,255,.25);
    background: linear-gradient(#7ed32d, #d6f79c);
}
.loose{
    width: 200px;
    font-size: 24px;
    color: #c6cdd2;
    background-color: #49545b;
    border-radius: 0 12px 12px 0;
}
.loose.off{
    align-items: flex-start;
    padding-top: 2px;
    color: #7b848a;
    border-radius: 0 12px 0 0;
}

.gutter{
    display: flex;
    flex-direction: column;
    background-color: #323e47;
    border-right: 2px solid #1b2830;
}
.cell{
    border-bottom: 2px solid #25313a;
}
.cell.picked{
    outline: 2px solid #a8e354;
    outline-offset: -3px;
    border-radius: 4px;
}

/* eight bars of grid per tile, a line every two bars */
.lanes{
    display: flex;
    flex-direction: column;
    overflow: hidden;
    background:
        linear-gradient(90deg, #0e1c26 1px, #1c2a34 1px 2px, transparent 2px 34px, #0e1c26 34px 35px, #1c2a34 35px 36px, transparent 36px 68px, #0e1c26 68px 69px, #1c2a34 69px 70px, transparent 70px 101px, #0e1c26 101px 102px, #1c2a34 102px 103px, transparent 103px) 0 0 / 135px 100%,
        linear-gradient(90deg, #34444e 68px, #2d3c46 68px) 0 0 / 135px 100%;
}
.lane{
    position: relative;
    box-shadow: inset 0 -2px #15232d;
}
.clip{
    position: absolute;
    left: calc(var(--at) * 135px / 8);
    width: calc(var(--len) * 135px / 8 - 1px);
    top: 0;
    bottom: 1px;
    display: flex;
    flex-direction: column;
    color: #eee6e4;
    overflow: hidden;
}
.big .clip:not(.faint, .bare){
    width: calc(var(--len) * 135px / 8);
}
.mini .clip, .automation, .clip-head{
    background: linear-gradient(var(--top), var(--low));
    border: 1px solid var(--rim);
    border-radius: 3px;
}
.clip-head{
    height: 31px;
    flex: none;
    display: flex;
    align-items: center;
    gap: 6px;
    padding-left: 3px;
    line-height: 26px;
}
.clip-head span{
    padding-bottom: 1px;
}
.clip-body{
    flex: 1;
    min-height: 0;
    background-color: var(--glass);
}
.clip.gold .notes{
    fill: #97925c;
}
.lane .clip.orange .notes{
    fill: #b98f6a;
}
.pink .clip-head{
    gap: 5px;
}
.faint .clip-head svg{
    opacity: .6;
}
.bare .clip-head svg, .sliced .clip-head svg{
    display: none;
}
.sliced .clip-head{
    background: repeating-linear-gradient(90deg, #9e2a54 0 3px, #7d1a42 3px 5px);
}
.automation{
    flex-direction: row;
    align-items: center;
    gap: 3px;
    line-height: 28px;
    white-space: nowrap;
    text-shadow: 1px 2px 1px rgba(0,0,0,.5);
}
.automation svg{
    width: 22px;
    height: 18px;
    flex: none;
    color: var(--icon);
}
```
